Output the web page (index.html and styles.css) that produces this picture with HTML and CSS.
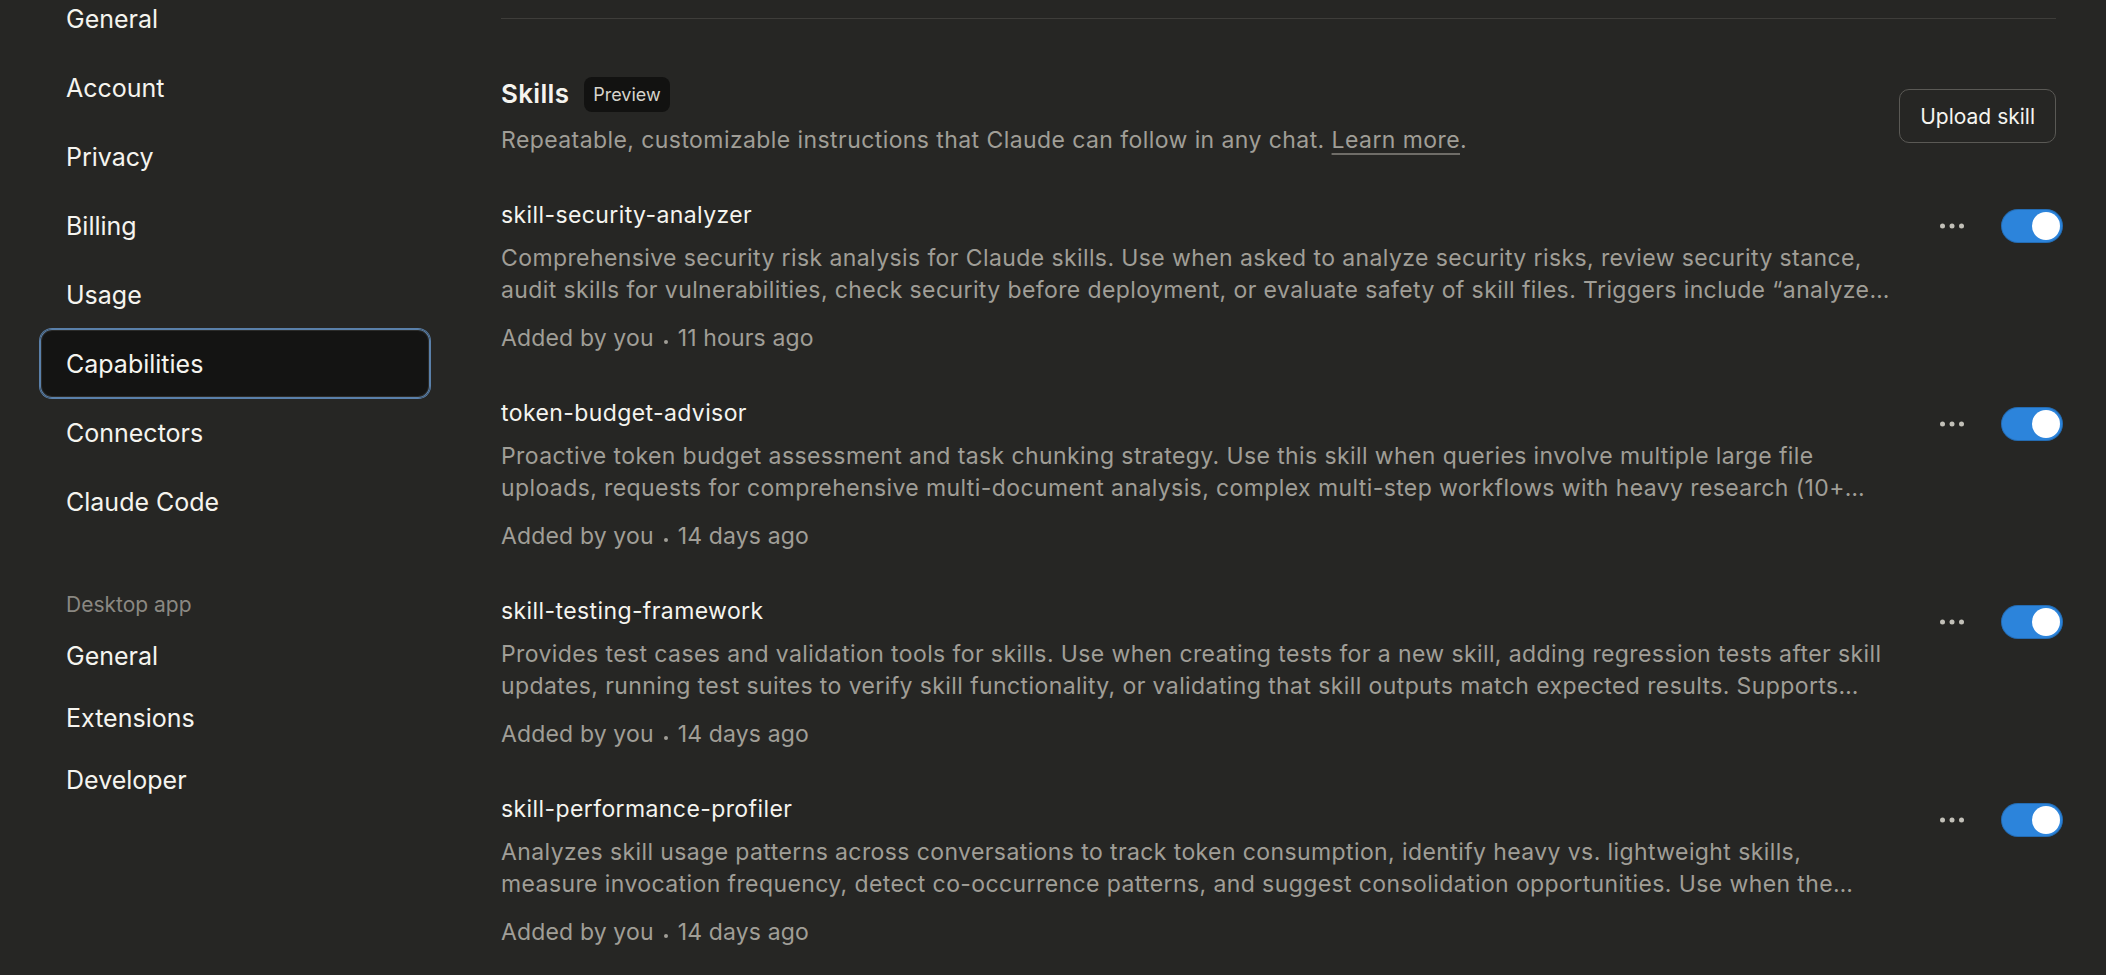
FILE: index.html
```html
<!DOCTYPE html>
<html lang="en">
<head>
<meta charset="utf-8">
<title>Settings – Capabilities</title>
<link rel="stylesheet" href="styles.css">
</head>
<body>
<div class="layout">
  <aside class="sidebar">
    <nav class="nav nav-main">
      <a class="nav-item">General</a>
      <a class="nav-item">Account</a>
      <a class="nav-item">Privacy</a>
      <a class="nav-item">Billing</a>
      <a class="nav-item">Usage</a>
      <a class="nav-item active">Capabilities</a>
      <a class="nav-item">Connectors</a>
      <a class="nav-item">Claude Code</a>
    </nav>
    <div class="nav-label">Desktop app</div>
    <nav class="nav nav-desktop">
      <a class="nav-item">General</a>
      <a class="nav-item">Extensions</a>
      <a class="nav-item">Developer</a>
    </nav>
  </aside>

  <main class="main">
    <div class="divider"></div>

    <section class="skills">
      <header class="skills-header">
        <div class="skills-intro">
          <div class="title-row">
            <h2 class="title">Skills</h2>
            <span class="badge">Preview</span>
          </div>
          <p class="intro-text">Repeatable, customizable instructions that Claude can follow in any chat. <a class="link">Learn more</a>.</p>
        </div>
        <button class="btn-outline">Upload skill</button>
      </header>

      <ul class="skill-list">
        <li class="skill">
          <div class="skill-text">
            <div class="skill-name">skill-security-analyzer</div>
            <p class="skill-desc">Comprehensive security risk analysis for Claude skills. Use when asked to analyze security risks, review security stance, audit skills for vulnerabilities, check security before deployment, or evaluate safety of skill files. Triggers include “analyze…</p>
            <div class="skill-meta">Added by you<span class="sep"></span>11 hours ago</div>
          </div>
          <div class="actions">
            <button class="more" aria-label="More options"><svg width="26" height="6" viewBox="0 0 26 6"><circle cx="3.5" cy="3" r="2.5"/><circle cx="13" cy="3" r="2.5"/><circle cx="22.5" cy="3" r="2.5"/></svg></button>
            <span class="toggle on"><span class="knob"></span></span>
          </div>
        </li>
        <li class="skill">
          <div class="skill-text">
            <div class="skill-name">token-budget-advisor</div>
            <p class="skill-desc">Proactive token budget assessment and task chunking strategy. Use this skill when queries involve multiple large file uploads, requests for comprehensive multi-document analysis, complex multi-step workflows with heavy research (10+…</p>
            <div class="skill-meta">Added by you<span class="sep"></span>14 days ago</div>
          </div>
          <div class="actions">
            <button class="more" aria-label="More options"><svg width="26" height="6" viewBox="0 0 26 6"><circle cx="3.5" cy="3" r="2.5"/><circle cx="13" cy="3" r="2.5"/><circle cx="22.5" cy="3" r="2.5"/></svg></button>
            <span class="toggle on"><span class="knob"></span></span>
          </div>
        </li>
        <li class="skill">
          <div class="skill-text">
            <div class="skill-name">skill-testing-framework</div>
            <p class="skill-desc">Provides test cases and validation tools for skills. Use when creating tests for a new skill, adding regression tests after skill updates, running test suites to verify skill functionality, or validating that skill outputs match expected results. Supports…</p>
            <div class="skill-meta">Added by you<span class="sep"></span>14 days ago</div>
          </div>
          <div class="actions">
            <button class="more" aria-label="More options"><svg width="26" height="6" viewBox="0 0 26 6"><circle cx="3.5" cy="3" r="2.5"/><circle cx="13" cy="3" r="2.5"/><circle cx="22.5" cy="3" r="2.5"/></svg></button>
            <span class="toggle on"><span class="knob"></span></span>
          </div>
        </li>
        <li class="skill">
          <div class="skill-text">
            <div class="skill-name">skill-performance-profiler</div>
            <p class="skill-desc">Analyzes skill usage patterns across conversations to track token consumption, identify heavy vs. lightweight skills, measure invocation frequency, detect co-occurrence patterns, and suggest consolidation opportunities. Use when the…</p>
            <div class="skill-meta">Added by you<span class="sep"></span>14 days ago</div>
          </div>
          <div class="actions">
            <button class="more" aria-label="More options"><svg width="26" height="6" viewBox="0 0 26 6"><circle cx="3.5" cy="3" r="2.5"/><circle cx="13" cy="3" r="2.5"/><circle cx="22.5" cy="3" r="2.5"/></svg></button>
            <span class="toggle on"><span class="knob"></span></span>
          </div>
        </li>
      </ul>
    </section>
  </main>
</div>
</body>
</html>
```

FILE: styles.css
```css
* { box-sizing: border-box; }

html, body {
  margin: 0;
  padding: 0;
  background: #262624;
  color: #f5f4ef;
  font-family: Inter, "Noto Sans", "Liberation Sans", sans-serif;
  height: 100%;
  overflow: hidden;
}

.layout {
  display: flex;
  align-items: flex-start;
  min-height: 100%;
}

/* Sidebar */
.sidebar {
  width: 430px;
  flex: none;
  padding-left: 40px;
}

.nav {
  display: flex;
  flex-direction: column;
}

.nav-main {
  margin-top: -16px;
}

.nav-item {
  display: flex;
  align-items: center;
  height: 69px;
  padding-left: 26px;
  border-radius: 12px;
  font-size: 25px;
  color: #f5f4ef;
  cursor: pointer;
}

.nav-item.active {
  background: #141413;
  box-shadow: 0 0 0 1px #5a80aa, inset 0 0 0 1px #5a80aa, inset 0 0 0 2px #2c2c2a;
}

.nav-label {
  margin-top: 54px;
  padding-left: 26px;
  height: 30px;
  line-height: 30px;
  font-size: 21px;
  color: #8a8882;
}

.nav-desktop {
  margin-top: 5px;
}

.nav-desktop .nav-item {
  height: 62px;
}

/* Main */
.main {
  flex: 1;
  min-width: 0;
  padding: 18px 43px 0 71px;
}

.divider {
  height: 1px;
  background: #3e3d3a;
  margin-right: 7px;
}

.skills {
  margin-top: 57px;
}

.skills-header {
  display: flex;
  align-items: center;
  justify-content: space-between;
  margin-right: 7px;
}

.title-row {
  display: flex;
  align-items: center;
  gap: 15px;
}

.title {
  margin: 0;
  font-size: 26px;
  font-weight: 600;
  line-height: 36px;
  letter-spacing: 0.3px;
  color: #f5f4ef;
}

.badge {
  display: inline-flex;
  align-items: center;
  height: 35px;
  padding: 0 9px;
  border-radius: 8px;
  background: #121211;
  color: #d6d4cc;
  font-size: 18px;
}

.intro-text {
  margin: 12px 0 0;
  font-size: 23px;
  line-height: 32px;
  letter-spacing: 0.42px;
  color: #a09e97;
}

.link {
  color: inherit;
  text-decoration: underline;
  text-decoration-color: #6f6d68;
  text-underline-offset: 5px;
  cursor: pointer;
}

.btn-outline {
  height: 54px;
  padding: 0 20px;
  border: 1px solid #5a5955;
  border-radius: 10px;
  background: transparent;
  color: #f5f4ef;
  font-family: inherit;
  font-size: 21px;
}

/* Skill list */
.skill-list {
  list-style: none;
  margin: 43px 0 0;
  padding: 0;
  display: flex;
  flex-direction: column;
  gap: 43px;
}

.skill {
  display: flex;
  align-items: flex-start;
}

.skill-text {
  flex: 1;
  min-width: 0;
}

.skill-name {
  font-size: 23px;
  line-height: 32px;
  letter-spacing: 0.4px;
  color: #f5f4ef;
}

.skill-desc {
  margin: 11px 0 0;
  font-size: 23px;
  line-height: 32px;
  letter-spacing: 0.4px;
  color: #a09e97;
  display: -webkit-box;
  -webkit-line-clamp: 2;
  -webkit-box-orient: vertical;
  overflow: hidden;
}

.skill-meta {
  margin-top: 16px;
  font-size: 23px;
  line-height: 32px;
  letter-spacing: 0.15px;
  color: #a09e97;
}

.sep {
  display: inline-block;
  width: 4px;
  height: 4px;
  border-radius: 50%;
  background: currentColor;
  margin: 0 10px;
  vertical-align: 2px;
}

.actions {
  flex: none;
  display: flex;
  align-items: center;
  gap: 31px;
  margin-left: 38px;
  margin-top: 10px;
}

.more {
  width: 36px;
  height: 34px;
  padding: 0;
  border: 0;
  background: transparent;
  display: flex;
  align-items: center;
  justify-content: center;
  fill: #c2c0b8;
  cursor: pointer;
}

.toggle {
  position: relative;
  display: block;
  width: 62px;
  height: 34px;
  border-radius: 17px;
  background: #2c84db;
  box-shadow: inset 0 0 0 1px rgba(0, 0, 0, 0.18);
}

.toggle .knob {
  position: absolute;
  top: 3px;
  right: 3px;
  width: 28px;
  height: 28px;
  border-radius: 50%;
  background: #ffffff;
}
```
